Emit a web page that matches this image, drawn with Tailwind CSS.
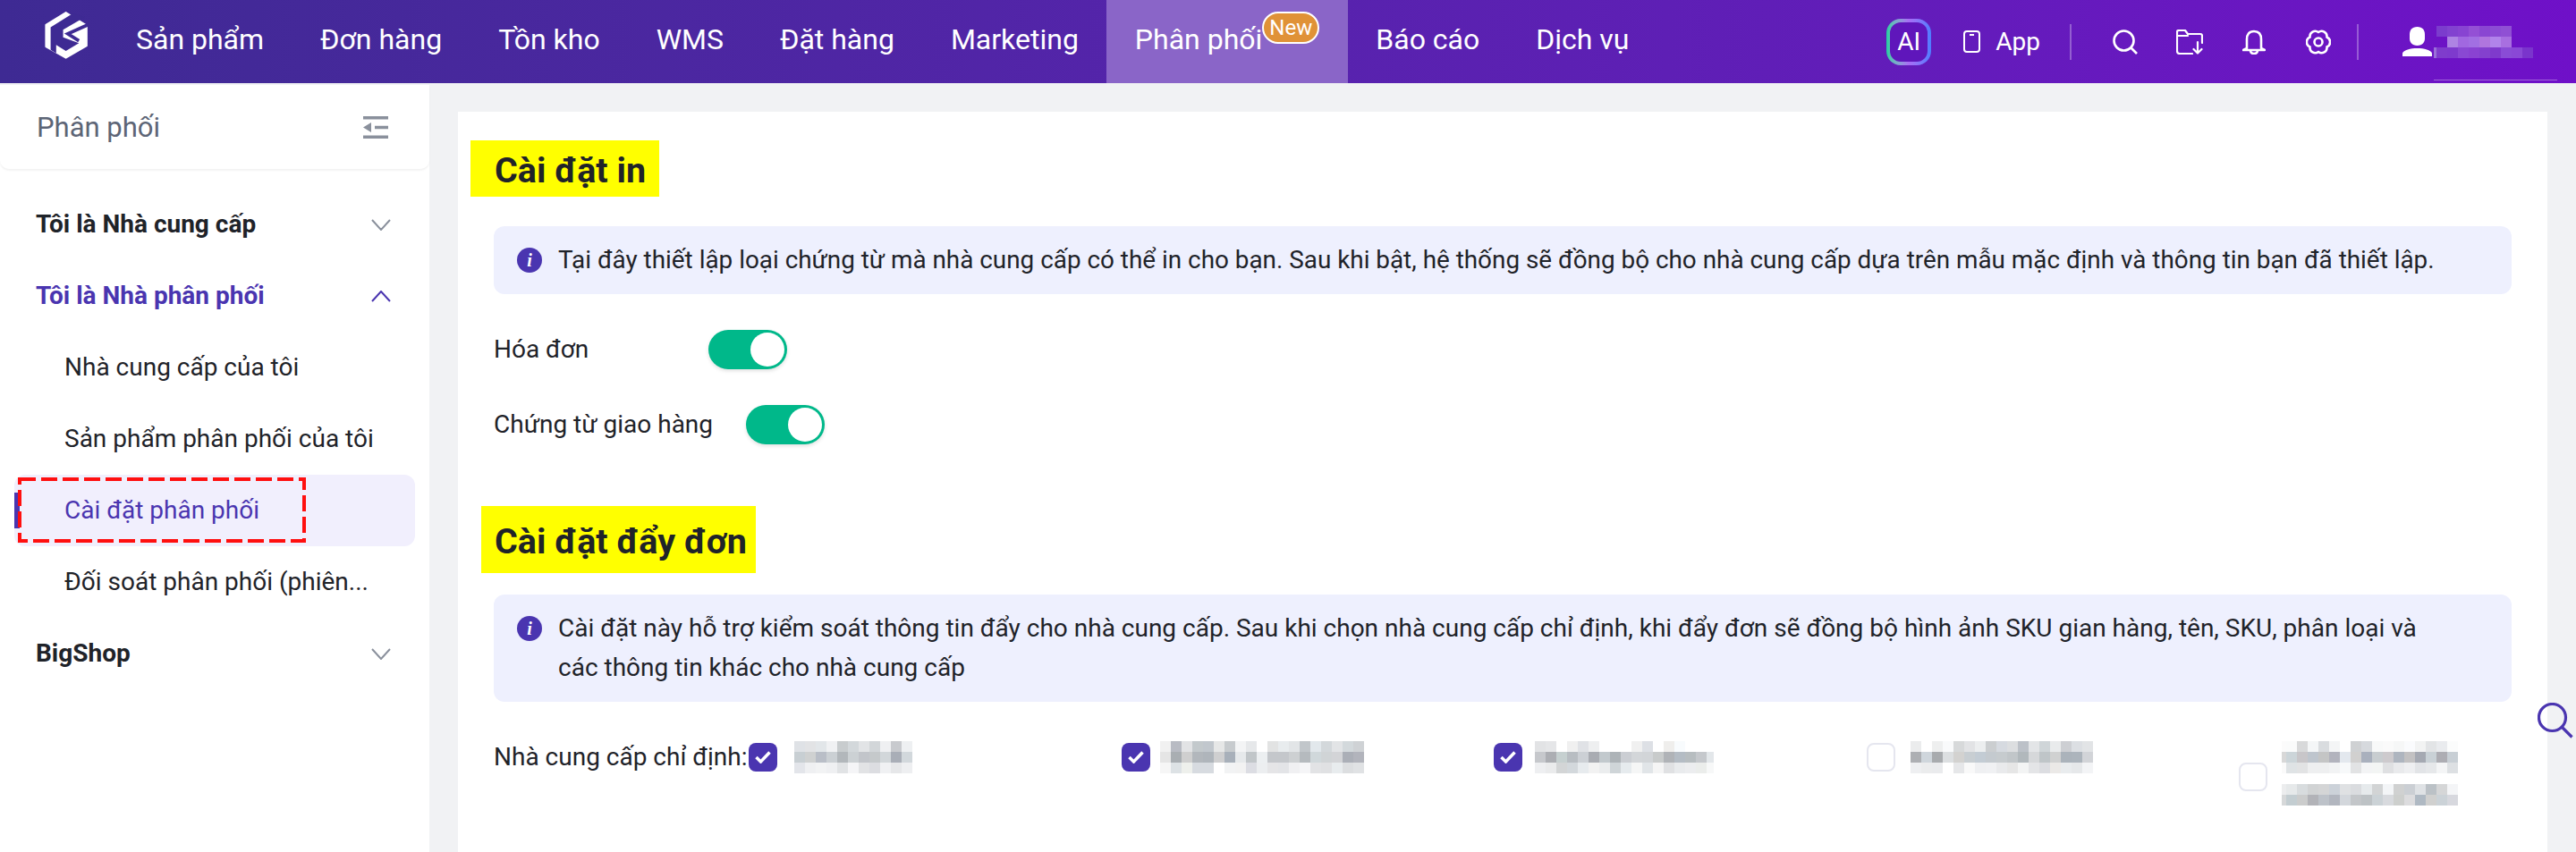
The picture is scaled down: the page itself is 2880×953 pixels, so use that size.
<!DOCTYPE html>
<html lang="vi">
<head>
<meta charset="utf-8">
<title>Cài đặt phân phối</title>
<script src="https://cdn.jsdelivr.net/npm/@tailwindcss/browser@4"></script>
</head>
<body class="font-[Roboto,sans-serif] text-[#1f2329]">
<svg width="0" height="0" class="absolute"><defs><rect id="c" width="12" height="12"/></defs></svg>
<div class="relative flex h-[953px] w-[2880px] flex-col overflow-hidden bg-[#f1f2f4]">

<header class="flex h-[93px] shrink-0 items-stretch bg-linear-to-r from-[#3e2a93] to-[#6f10c8] text-white">
  <div class="flex w-[120.5px] items-center justify-start">
    <svg width="200" height="100" viewBox="0 0 600 300" class="h-[93px] shrink-0">
      <path fill="#fff" stroke="#fff" stroke-width="6" stroke-linejoin="round" d="M215 45 290 92V165L215 209 143 168V90Z"/>
      <path fill="#3e2a93" d="M240 48 160 98V180L180 192V162L215 184 262 156 205 135V107L284 61Z"/>
      <path fill="none" stroke="#3e2a93" stroke-width="12" d="M298 88 222 122 262 147"/>
    </svg>
  </div>
  <nav class="flex items-stretch pb-[6px] text-[32px] leading-none">
    <a class="flex items-center px-[31.5px]">Sản phẩm</a>
    <a class="flex items-center px-[31.5px]">Đơn hàng</a>
    <a class="flex items-center px-[31.5px]">Tồn kho</a>
    <a class="flex items-center px-[31.5px]">WMS</a>
    <a class="flex items-center px-[31.5px]">Đặt hàng</a>
    <a class="flex items-center px-[31.5px]">Marketing</a>
    <a class="-mb-[6px] flex items-center bg-[#8a65c8] pb-[6px] pl-[31.5px] pr-[31.5px]">Phân phối<span class="mb-[25px] flex h-[36px] w-[64px] items-center justify-center rounded-full border-2 border-white bg-[#e09237] text-[24px]">New</span></a>
    <a class="flex items-center px-[31.5px]">Báo cáo</a>
    <a class="flex items-center px-[31.5px]">Dịch vụ</a>
  </nav>
  <div class="ml-auto flex items-center pr-[21px]">
    <div class="flex h-[52px] w-[50px] rounded-[16px] bg-linear-to-r from-[#12d0a0] via-[#a86cf5] to-[#4c7dff] p-[4px]">
      <div class="flex flex-1 items-center justify-center rounded-[12px] bg-[#5f16bb] text-[28px] leading-none">AI</div>
    </div>
    <svg class="ml-[36px]" width="19" height="25" viewBox="0 0 19 25" fill="none" stroke="#fff" stroke-width="2"><rect x="1" y="1" width="17" height="23" rx="3"/><path d="M7 5h5"/></svg>
    <span class="ml-[17px] text-[28px] leading-none">App</span>
    <div class="ml-[33px] h-[40px] w-[2px] bg-white/30"></div>
    <svg class="ml-[46px]" width="28" height="28" viewBox="0 0 28 28" fill="none" stroke="#fff" stroke-width="2.6"><circle cx="12.5" cy="12.5" r="11"/><path d="M20.5 20.5 27 27"/></svg>
    <svg class="ml-[43px]" width="30" height="28" viewBox="0 0 30 28" fill="none" stroke="#fff" stroke-width="2.2" stroke-linejoin="round" stroke-linecap="round"><path d="M18 27H4Q1 27 1 24V2.5Q1 1 3 1H10L13 5H27Q29 5 29 7V15"/><path d="M1 7H13"/><path d="M24 14V26M19.500 22 24 26.500 28.500 22"/></svg>
    <svg class="ml-[44px]" width="26" height="28" viewBox="0 0 26 28" fill="none" stroke="#fff" stroke-width="2.6" stroke-linejoin="round"><path d="M5 21V11Q5 2 13 2T21 11V21L25 23H1Z"/><path d="M9 23Q9 27 13 27T17 23"/></svg>
    <svg class="ml-[45px]" width="28" height="28" viewBox="0 0 28 28" fill="none" stroke="#fff" stroke-width="2.6"><path d="M14 3A6 6 0 0 1 23.5 8.5A6 6 0 0 1 23.5 19.5A6 6 0 0 1 14 25A6 6 0 0 1 4.500 19.500A6 6 0 0 1 4.500 8.500A6 6 0 0 1 14 3Z"/><circle cx="14" cy="14" r="4.500"/></svg>
    <div class="ml-[29px] h-[40px] w-[2px] bg-white/30"></div>
    <svg class="ml-[49px]" width="33" height="33" viewBox="0 0 33 33" fill="#fff"><path d="M16.500 0C10.500 0 8 4 8 8.500V13C8 17 10.500 21 16.500 21S25 17 25 13V8.500C25 4 22.500 0 16.500 0Z"/><path d="M0 33V29.500C1 26 9 24 16.500 24S32 26 33 29.500V33Z"/></svg>
    <div class="relative ml-[2px] h-[36px] w-[138px]">
      <svg width="111" height="36" viewBox="0 0 111 36" class="block" shape-rendering="crispEdges">
        <use href="#c" x="3" fill="#7b3ccd"/><use href="#c" x="15" fill="#8242d0"/><use href="#c" x="27" fill="#8844d2"/><use href="#c" x="39" fill="#9450d5"/><use href="#c" x="51" fill="#8a46d2"/><use href="#c" x="63" fill="#8c4cd4"/><use href="#c" x="75" fill="#9050d4"/>
        <g transform="translate(0 12)"><use href="#c" x="15" fill="#ae84e3"/><use href="#c" x="27" fill="#a168e0"/><use href="#c" x="39" fill="#a26fe2"/><use href="#c" x="51" fill="#b075de"/><use href="#c" x="63" fill="#b184ea"/><use href="#c" x="75" fill="#a86fe0"/></g>
        <g transform="translate(0 24)"><use href="#c" x="-9" fill="#9a70d8"/><use href="#c" x="3" fill="#7f3ccc"/><use href="#c" x="15" fill="#7e3acd"/><use href="#c" x="27" fill="#8a48d3"/><use href="#c" x="39" fill="#8a42d2"/><use href="#c" x="51" fill="#8440ce"/><use href="#c" x="63" fill="#7f3acc"/><use href="#c" x="75" fill="#8a4cd6"/><use href="#c" x="87" fill="#8a48d6"/><use href="#c" x="99" fill="#7a34cc"/></g>
      </svg>
      <div class="absolute left-0 top-[60px] h-[1px] w-[138px] bg-white/35"></div>
    </div>
  </div>
</header>

<main class="flex min-h-0 flex-1">
  <aside class="mt-[2px] w-[480px] shrink-0 bg-white text-[28px] leading-none">
    <div class="flex h-[94px] items-center justify-between rounded-b-[10px] pl-[41px] pr-[46px] text-[31px] text-[#5d6576] shadow-[0_2px_2px_rgba(0,0,0,0.05)]">
      <span>Phân phối</span>
      <svg width="28" height="25" viewBox="0 0 28 25" fill="#8a909c"><path d="M0 0H28V3.500H0ZM0 21.500H28V25H0ZM13 10.700H28V14.300H13ZM0 12.500 9 7V18Z"/></svg>
    </div>
    <ul class="pt-[22px]">
      <li class="flex h-[80px] items-center justify-between pl-[40px] pr-[43px] font-bold">Tôi là Nhà cung cấp
        <svg width="22" height="13" viewBox="0 0 22 13" fill="none" stroke="#8a909c" stroke-width="2"><path d="M1 1 11 12 21 1"/></svg></li>
      <li class="flex h-[80px] items-center justify-between pl-[40px] pr-[43px] font-bold text-[#4a35b0]">Tôi là Nhà phân phối
        <svg width="22" height="13" viewBox="0 0 22 13" fill="none" stroke="#4a35b0" stroke-width="2"><path d="M1 12 11 1 21 12"/></svg></li>
      <li class="flex h-[80px] items-center pl-[72px]">Nhà cung cấp của tôi</li>
      <li class="flex h-[80px] items-center pl-[72px]">Sản phẩm phân phối của tôi</li>
      <li class="relative mx-[16px] flex h-[80px] items-center rounded-[12px] bg-[#f1effd] pl-[56px] text-[#4a35b0]">
        <span class="absolute left-0 top-[20px] h-[40px] w-[6px] bg-[#4a35b0]"></span>
        <svg class="absolute left-[4px] top-[3px]" width="322" height="73" viewBox="0 0 322 73" fill="none"><rect x="2" y="2" width="318" height="69" stroke="#ff0f0f" stroke-width="4" stroke-dasharray="18 6"/></svg>
        Cài đặt phân phối</li>
      <li class="flex h-[80px] items-center pl-[72px]">Đối soát phân phối (phiên...</li>
      <li class="flex h-[80px] items-center justify-between pl-[40px] pr-[43px] font-bold">BigShop
        <svg width="22" height="13" viewBox="0 0 22 13" fill="none" stroke="#8a909c" stroke-width="2"><path d="M1 1 11 12 21 1"/></svg></li>
    </ul>
  </aside>

  <section class="min-w-0 flex-1 pl-[32px] pr-[32px] pt-[32px]">
    <div class="h-[900px] bg-white pt-[32px] text-[28px] leading-[44px]">
      <h2 class="ml-[14px] flex h-[63px] w-[211px] items-center bg-[#ffff00] pl-[27px] pt-[5px] text-[39.5px] font-bold leading-none">Cài đặt in</h2>
      <div class="mx-[40px] mt-[33px] flex rounded-[12px] bg-[#eef0fe] py-[16px] pl-[26px] pr-[70px]">
        <svg class="mt-[8px] shrink-0" width="28" height="28" viewBox="0 0 28 28"><circle cx="14" cy="14" r="14" fill="#4a35b0"/><text x="14" y="21" text-anchor="middle" fill="#fff" font-size="20" font-style="italic" font-weight="700" font-family="Liberation Serif">i</text></svg>
        <p class="ml-[18px] text-[27.87px]">Tại đây thiết lập loại chứng từ mà nhà cung cấp có thể in cho bạn. Sau khi bật, hệ thống sẽ đồng bộ cho nhà cung cấp dựa trên mẫu mặc định và thông tin bạn đã thiết lập.</p>
      </div>
      <div class="mx-[40px] mt-[40px] flex h-[44px] items-center">
        <span class="w-[200px]">Hóa đơn</span>
        <span class="relative ml-[40px] h-[44px] w-[88px] rounded-full bg-[#00b88a] shadow-[0_2px_4px_rgba(0,0,0,0.12)]"><span class="absolute right-[3px] top-[3px] h-[38px] w-[38px] rounded-full bg-white"></span></span>
      </div>
      <div class="mx-[40px] mt-[40px] flex h-[44px] items-center">
        <span>Chứng từ giao hàng</span>
        <span class="relative ml-[37px] h-[44px] w-[88px] rounded-full bg-[#00b88a] shadow-[0_2px_4px_rgba(0,0,0,0.12)]"><span class="absolute right-[3px] top-[3px] h-[38px] w-[38px] rounded-full bg-white"></span></span>
      </div>
      <h2 class="ml-[26px] mt-[69px] flex h-[75px] w-[307px] items-center bg-[#ffff00] pl-[15px] pt-[4px] text-[39.5px] font-bold leading-none">Cài đặt đẩy đơn</h2>
      <div class="mx-[40px] mt-[24px] flex rounded-[12px] bg-[#eef0fe] py-[16px] pl-[26px] pr-[70px]">
        <svg class="mt-[8px] shrink-0" width="28" height="28" viewBox="0 0 28 28"><circle cx="14" cy="14" r="14" fill="#4a35b0"/><text x="14" y="21" text-anchor="middle" fill="#fff" font-size="20" font-style="italic" font-weight="700" font-family="Liberation Serif">i</text></svg>
        <p class="ml-[18px]">Cài đặt này hỗ trợ kiểm soát thông tin đẩy cho nhà cung cấp. Sau khi chọn nhà cung cấp chỉ định, khi đẩy đơn sẽ đồng bộ hình ảnh SKU gian hàng, tên, SKU, phân loại và các thông tin khác cho nhà cung cấp</p>
      </div>
      <div class="ml-[40px] mt-[44px] flex items-start">
        <span class="h-[36px] w-[285px] shrink-0 leading-[36px]">Nhà cung cấp chỉ định:</span>
        <div class="grid flex-1 grid-cols-[repeat(4,416.5px)_1fr] items-start">
          <div class="flex items-center">
            <span class="flex h-[32px] w-[32px] items-center justify-center rounded-[8px] bg-[#4a35b0]"><svg width="18" height="14" viewBox="0 0 18 14" fill="none" stroke="#fff" stroke-width="3.500"><path d="M1.500 7 6.500 12 16.500 1.500"/></svg></span>
            <svg class="ml-[19px]" width="132" height="36" viewBox="0 0 132 36" shape-rendering="crispEdges">
              <g><use href="#c" x="0" fill="#dfe2e6"/><use href="#c" x="12" fill="#e2e3e5"/><use href="#c" x="24" fill="#e2e6e9"/><use href="#c" x="36" fill="#f0f1f3"/><use href="#c" x="48" fill="#c8ccce"/><use href="#c" x="60" fill="#d3d8db"/><use href="#c" x="72" fill="#e2e4e6"/><use href="#c" x="84" fill="#d2d6d9"/><use href="#c" x="96" fill="#eff0f2"/><use href="#c" x="108" fill="#c8cace"/><use href="#c" x="120" fill="#eef0f2"/></g>
              <g transform="translate(0 12)"><use href="#c" x="0" fill="#c8cfd3"/><use href="#c" x="12" fill="#cfd1d1"/><use href="#c" x="24" fill="#b9bec7"/><use href="#c" x="36" fill="#cbd0d4"/><use href="#c" x="48" fill="#b2b7bb"/><use href="#c" x="60" fill="#ccd1d4"/><use href="#c" x="72" fill="#c2c5ca"/><use href="#c" x="84" fill="#c5c9cb"/><use href="#c" x="96" fill="#d2d7da"/><use href="#c" x="108" fill="#a9aeb7"/><use href="#c" x="120" fill="#d2d8dc"/></g>
              <g transform="translate(0 24)"><use href="#c" x="0" fill="#e3e5ea"/><use href="#c" x="12" fill="#eff0f2"/><use href="#c" x="24" fill="#f2f3f4"/><use href="#c" x="36" fill="#eff0f2"/><use href="#c" x="48" fill="#e1e3e5"/><use href="#c" x="60" fill="#f5f5f7"/><use href="#c" x="72" fill="#e2e3e5"/><use href="#c" x="84" fill="#dcdde1"/><use href="#c" x="96" fill="#f0f1f3"/><use href="#c" x="108" fill="#e6e7e9"/><use href="#c" x="120" fill="#eeeff1"/></g>
            </svg>
          </div>
          <div class="flex items-center">
            <span class="flex h-[32px] w-[32px] items-center justify-center rounded-[8px] bg-[#4a35b0]"><svg width="18" height="14" viewBox="0 0 18 14" fill="none" stroke="#fff" stroke-width="3.500"><path d="M1.500 7 6.500 12 16.500 1.500"/></svg></span>
            <svg class="ml-[11px]" width="228" height="36" viewBox="0 0 228 36" shape-rendering="crispEdges">
              <g><use href="#c" x="0" fill="#f1f1f1"/><use href="#c" x="12" fill="#b8bbc3"/><use href="#c" x="24" fill="#e2e3e5"/><use href="#c" x="36" fill="#c3c9cc"/><use href="#c" x="48" fill="#c1c7cd"/><use href="#c" x="60" fill="#e6e7e7"/><use href="#c" x="72" fill="#c7cbce"/><use href="#c" x="84" fill="#f3f4f5"/><use href="#c" x="96" fill="#e6e8ea"/><use href="#c" x="120" fill="#e2e3e3"/><use href="#c" x="132" fill="#e8ecee"/><use href="#c" x="144" fill="#e2e5e7"/><use href="#c" x="156" fill="#c1c6ca"/><use href="#c" x="168" fill="#e2e8ec"/><use href="#c" x="180" fill="#d3d8db"/><use href="#c" x="192" fill="#e2e4e6"/><use href="#c" x="204" fill="#d3d9dc"/><use href="#c" x="216" fill="#cfd2d5"/></g>
              <g transform="translate(0 12)"><use href="#c" x="0" fill="#e5e5e5"/><use href="#c" x="12" fill="#a9aeb2"/><use href="#c" x="24" fill="#cfcfcf"/><use href="#c" x="36" fill="#b2b7bc"/><use href="#c" x="48" fill="#afb5bb"/><use href="#c" x="60" fill="#cfcfd0"/><use href="#c" x="72" fill="#a8b0ba"/><use href="#c" x="84" fill="#e6e9eb"/><use href="#c" x="96" fill="#c1c6c9"/><use href="#c" x="108" fill="#eceff1"/><use href="#c" x="120" fill="#c4c7cb"/><use href="#c" x="132" fill="#c4c7cb"/><use href="#c" x="144" fill="#cdd0d2"/><use href="#c" x="156" fill="#b5babe"/><use href="#c" x="168" fill="#d0d8db"/><use href="#c" x="180" fill="#d0d4d6"/><use href="#c" x="192" fill="#d3d4d7"/><use href="#c" x="204" fill="#abafb7"/><use href="#c" x="216" fill="#b2b4bc"/></g>
              <g transform="translate(0 24)"><use href="#c" x="0" fill="#f6f6f6"/><use href="#c" x="12" fill="#dde2e5"/><use href="#c" x="24" fill="#eef0ec"/><use href="#c" x="36" fill="#d7dbe0"/><use href="#c" x="48" fill="#d7dbe0"/><use href="#c" x="72" fill="#f2f3f4"/><use href="#c" x="84" fill="#f2f2f2"/><use href="#c" x="96" fill="#dcdde3"/><use href="#c" x="108" fill="#eceef0"/><use href="#c" x="120" fill="#e5e5e7"/><use href="#c" x="132" fill="#e3e4e7"/><use href="#c" x="144" fill="#f0f0f2"/><use href="#c" x="156" fill="#f5f5f7"/><use href="#c" x="168" fill="#e2e3e5"/><use href="#c" x="180" fill="#e0e1e3"/><use href="#c" x="192" fill="#e8ecee"/><use href="#c" x="204" fill="#dcdee0"/><use href="#c" x="216" fill="#e0e2e4"/></g>
            </svg>
          </div>
          <div class="flex items-center">
            <span class="flex h-[32px] w-[32px] items-center justify-center rounded-[8px] bg-[#4a35b0]"><svg width="18" height="14" viewBox="0 0 18 14" fill="none" stroke="#fff" stroke-width="3.500"><path d="M1.500 7 6.500 12 16.500 1.500"/></svg></span>
            <svg class="ml-[14px]" width="200" height="36" viewBox="0 0 200 36" shape-rendering="crispEdges">
              <g><use href="#c" x="0" fill="#e2e3e5"/><use href="#c" x="12" fill="#e5e6e8"/><use href="#c" x="36" fill="#f0f0f0"/><use href="#c" x="48" fill="#e0e2e6"/><use href="#c" x="60" fill="#eeeff0"/><use href="#c" x="108" fill="#f0f0f0"/><use href="#c" x="120" fill="#dde0e5"/><use href="#c" x="144" fill="#efeeec"/><use href="#c" x="156" fill="#f8fbfd"/></g>
              <g transform="translate(0 12)"><use href="#c" x="0" fill="#c6c8cc"/><use href="#c" x="12" fill="#acaeb3"/><use href="#c" x="24" fill="#c6d0d0"/><use href="#c" x="36" fill="#b8bdc2"/><use href="#c" x="48" fill="#ccd0d5"/><use href="#c" x="60" fill="#a9acb2"/><use href="#c" x="72" fill="#c2c9cd"/><use href="#c" x="84" fill="#adb3b7"/><use href="#c" x="96" fill="#cbced3"/><use href="#c" x="108" fill="#d3d6d9"/><use href="#c" x="120" fill="#d2d5d8"/><use href="#c" x="132" fill="#c8cbcb"/><use href="#c" x="144" fill="#b0b3b7"/><use href="#c" x="156" fill="#b4bcc4"/><use href="#c" x="168" fill="#b7bdc0"/><use href="#c" x="180" fill="#c5c8cc"/><use href="#c" x="192" fill="#e3e7ea"/></g>
              <g transform="translate(0 24)"><use href="#c" x="0" fill="#eeeff1"/><use href="#c" x="12" fill="#eaebec"/><use href="#c" x="24" fill="#d3d5d6"/><use href="#c" x="36" fill="#d3d8dc"/><use href="#c" x="48" fill="#e7ebee"/><use href="#c" x="60" fill="#f2f2f2"/><use href="#c" x="72" fill="#ebedee"/><use href="#c" x="84" fill="#cfd5d8"/><use href="#c" x="96" fill="#e6ebee"/><use href="#c" x="108" fill="#f5f6f6"/><use href="#c" x="120" fill="#e1e5e8"/><use href="#c" x="132" fill="#f5f5f5"/><use href="#c" x="144" fill="#e0e1e3"/><use href="#c" x="156" fill="#e9ebed"/><use href="#c" x="168" fill="#ecedef"/><use href="#c" x="180" fill="#ebedeb"/><use href="#c" x="192" fill="#f7f8f8"/></g>
            </svg>
          </div>
          <div class="flex items-center">
            <span class="h-[32px] w-[32px] rounded-[8px] border-2 border-[#e5e6ef] bg-white"></span>
            <svg class="ml-[17px]" width="204" height="36" viewBox="0 0 204 36" shape-rendering="crispEdges">
              <g><use href="#c" x="0" fill="#ebeced"/><use href="#c" x="24" fill="#eeefef"/><use href="#c" x="36" fill="#f9fafb"/><use href="#c" x="48" fill="#d7d9da"/><use href="#c" x="60" fill="#e2e3e5"/><use href="#c" x="72" fill="#eceeef"/><use href="#c" x="84" fill="#cbced0"/><use href="#c" x="96" fill="#d6dae0"/><use href="#c" x="108" fill="#dcdee0"/><use href="#c" x="120" fill="#bcc1c8"/><use href="#c" x="132" fill="#e3e5e7"/><use href="#c" x="144" fill="#cfd5d8"/><use href="#c" x="156" fill="#e9ebec"/><use href="#c" x="168" fill="#cdcfd3"/><use href="#c" x="180" fill="#dcdfe3"/><use href="#c" x="192" fill="#e2e4e6"/></g>
              <g transform="translate(0 12)"><use href="#c" x="0" fill="#adafb3"/><use href="#c" x="12" fill="#cfd6dc"/><use href="#c" x="24" fill="#a8abae"/><use href="#c" x="36" fill="#dcdfe1"/><use href="#c" x="48" fill="#d3d2d0"/><use href="#c" x="60" fill="#c8ced2"/><use href="#c" x="72" fill="#c3ccd4"/><use href="#c" x="84" fill="#c4cacf"/><use href="#c" x="96" fill="#c6cbce"/><use href="#c" x="108" fill="#c1c6c9"/><use href="#c" x="120" fill="#b1b8bc"/><use href="#c" x="132" fill="#d6d8da"/><use href="#c" x="144" fill="#bfc5c8"/><use href="#c" x="156" fill="#d0d1d1"/><use href="#c" x="168" fill="#abb3bb"/><use href="#c" x="180" fill="#acb4bc"/><use href="#c" x="192" fill="#d2d4d8"/></g>
              <g transform="translate(0 24)"><use href="#c" x="0" fill="#eeeff1"/><use href="#c" x="12" fill="#ebeced"/><use href="#c" x="24" fill="#eaebed"/><use href="#c" x="48" fill="#e6e7e9"/><use href="#c" x="60" fill="#f9f9f9"/><use href="#c" x="72" fill="#eff0f2"/><use href="#c" x="84" fill="#f0f1f3"/><use href="#c" x="96" fill="#e9eaec"/><use href="#c" x="108" fill="#e6e6e6"/><use href="#c" x="120" fill="#f3f4f4"/><use href="#c" x="132" fill="#e4e5e7"/><use href="#c" x="144" fill="#dcdde1"/><use href="#c" x="156" fill="#ebe9e7"/><use href="#c" x="168" fill="#e9ecee"/><use href="#c" x="180" fill="#e6e8ea"/><use href="#c" x="192" fill="#f3f4f6"/></g>
            </svg>
          </div>
          <div class="flex items-center">
            <span class="mt-[8px] h-[32px] w-[32px] rounded-[8px] border-2 border-[#e5e6ef] bg-white"></span>
            <svg class="ml-[16px]" width="197" height="72" viewBox="0 0 197 72" shape-rendering="crispEdges">
              <g><use href="#c" x="-7" fill="#fbfbfb"/><use href="#c" x="5" fill="#fafbfb"/><use href="#c" x="17" fill="#d8d9da"/><use href="#c" x="29" fill="#f4f6f7"/><use href="#c" x="41" fill="#d9dcdf"/><use href="#c" x="53" fill="#f4f5f6"/><use href="#c" x="77" fill="#cfd1d3"/><use href="#c" x="89" fill="#d6d9dd"/><use href="#c" x="101" fill="#f8f9f9"/><use href="#c" x="113" fill="#fafafa"/><use href="#c" x="125" fill="#f6f7f7"/><use href="#c" x="137" fill="#fafbfd"/><use href="#c" x="149" fill="#f2f3f3"/><use href="#c" x="161" fill="#e2e4e6"/><use href="#c" x="173" fill="#e9ebee"/><use href="#c" x="185" fill="#fbfcfc"/></g>
              <g transform="translate(0 12)"><use href="#c" x="-7" fill="#d8d8d8"/><use href="#c" x="5" fill="#ccd5d9"/><use href="#c" x="17" fill="#c8c6c9"/><use href="#c" x="29" fill="#bec5cd"/><use href="#c" x="41" fill="#c4c5c5"/><use href="#c" x="53" fill="#b2b3bd"/><use href="#c" x="65" fill="#e3e8ee"/><use href="#c" x="77" fill="#d1d0cf"/><use href="#c" x="89" fill="#a9b0bd"/><use href="#c" x="101" fill="#c8cdd0"/><use href="#c" x="113" fill="#cdcacd"/><use href="#c" x="125" fill="#aeb5bf"/><use href="#c" x="137" fill="#c2c1c2"/><use href="#c" x="149" fill="#a5a9b2"/><use href="#c" x="161" fill="#c9d1d6"/><use href="#c" x="173" fill="#adadb3"/><use href="#c" x="185" fill="#c8cfd5"/></g>
              <g transform="translate(0 24)"><use href="#c" x="-7" fill="#fafafa"/><use href="#c" x="5" fill="#dfe3e5"/><use href="#c" x="17" fill="#e2e3e4"/><use href="#c" x="29" fill="#eeeff0"/><use href="#c" x="41" fill="#eeeff0"/><use href="#c" x="53" fill="#f2f3f4"/><use href="#c" x="65" fill="#f7f9fa"/><use href="#c" x="77" fill="#e2e3e4"/><use href="#c" x="89" fill="#f3f4f5"/><use href="#c" x="101" fill="#f3f5f4"/><use href="#c" x="113" fill="#dfe0e2"/><use href="#c" x="125" fill="#e9eaec"/><use href="#c" x="137" fill="#eeeff1"/><use href="#c" x="149" fill="#e2e4e7"/><use href="#c" x="161" fill="#e6e8ea"/><use href="#c" x="173" fill="#f4f5f6"/><use href="#c" x="185" fill="#dde0e3"/></g>
              <g transform="translate(0 48)"><use href="#c" x="-7" fill="#ecedee"/><use href="#c" x="5" fill="#e6e9ea"/><use href="#c" x="17" fill="#d8dcde"/><use href="#c" x="29" fill="#d1d3d4"/><use href="#c" x="41" fill="#d4d5d6"/><use href="#c" x="53" fill="#ccd2d9"/><use href="#c" x="65" fill="#dfe1e3"/><use href="#c" x="77" fill="#dadcdf"/><use href="#c" x="89" fill="#e6eaec"/><use href="#c" x="101" fill="#d2d4d5"/><use href="#c" x="113" fill="#f3f5f7"/><use href="#c" x="125" fill="#d0d1d1"/><use href="#c" x="137" fill="#cbcfd4"/><use href="#c" x="149" fill="#dfe2e5"/><use href="#c" x="161" fill="#bbc1c6"/><use href="#c" x="173" fill="#d5d6d7"/><use href="#c" x="185" fill="#f4f5f7"/></g>
              <g transform="translate(0 60)"><use href="#c" x="-7" fill="#d6d8d9"/><use href="#c" x="5" fill="#c3cdd1"/><use href="#c" x="17" fill="#cbcccc"/><use href="#c" x="29" fill="#b2b3b8"/><use href="#c" x="41" fill="#bdc2c9"/><use href="#c" x="53" fill="#b2b6bf"/><use href="#c" x="65" fill="#d3d7dc"/><use href="#c" x="77" fill="#c3c6c9"/><use href="#c" x="89" fill="#bdc2c5"/><use href="#c" x="101" fill="#cbd2d6"/><use href="#c" x="113" fill="#d8dade"/><use href="#c" x="125" fill="#cdcfcd"/><use href="#c" x="137" fill="#dcdcde"/><use href="#c" x="149" fill="#afb9c3"/><use href="#c" x="161" fill="#d0d0cf"/><use href="#c" x="173" fill="#cbd2d7"/><use href="#c" x="185" fill="#d7d8de"/></g>
            </svg>
          </div>
        </div>
      </div>
    </div>
  </section>
</main>

<svg class="absolute left-[2837px] top-[786px]" width="40" height="40" viewBox="0 0 40 40" fill="none" stroke="#4a35b0" stroke-width="3.200"><circle cx="16.500" cy="16.500" r="15"/><path d="M27.500 27.500 38.500 38.500"/></svg>
</div>
</body>
</html>
